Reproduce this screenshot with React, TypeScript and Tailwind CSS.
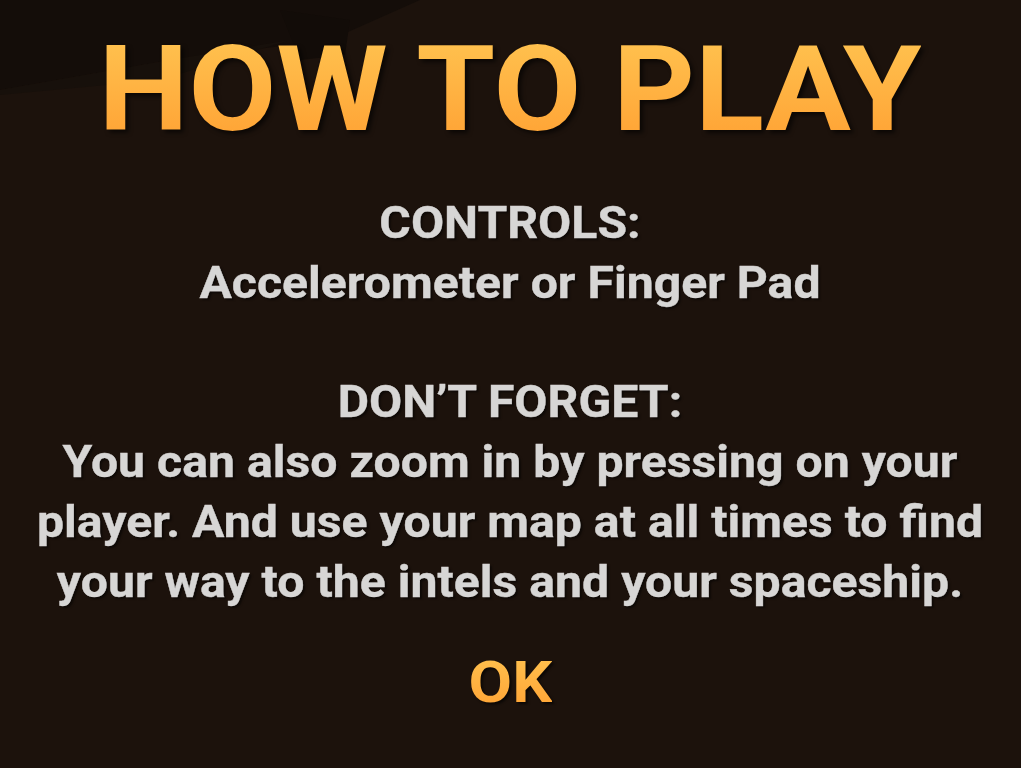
export default function App() {
  return (
    <div
      className="relative h-[768px] w-[1021px] overflow-hidden bg-[#1c120c] text-center"
      style={{ fontFamily: "Roboto, 'Liberation Sans', sans-serif" }}
    >
      <svg className="absolute inset-0" width="1021" height="768" viewBox="0 0 1021 768">
        <polygon points="0,0 420,0 330,40 170,60 0,90" fill="#140d09" />
        <polygon points="0,90 170,60 290,40 160,80 0,95" fill="#17100b" />
        <polygon points="280,10 350,20 345,55 300,60" fill="#120c08" />
      </svg>

      <div className="relative flex flex-col items-center">
        <h1 className="mt-[27px] scale-x-[1.08] bg-gradient-to-b from-[#ffc551] to-[#ff9f31] bg-clip-text text-[118px] font-bold leading-[126px] text-transparent [filter:drop-shadow(3px_3px_2px_rgba(0,0,0,0.6))]">
          HOW TO PLAY
        </h1>

        <div className="mt-[40px] scale-x-[1.095] text-[44px] font-bold leading-[60px] text-[#d7d6d5] [-webkit-text-stroke:0.4px_#d7d6d5] [text-shadow:2px_2px_2px_rgba(0,0,0,0.5)]">
          <p>CONTROLS:</p>
          <p>Accelerometer or Finger Pad</p>
          <p className="mt-[59px]">DON’T FORGET:</p>
          <p>
            You can also zoom in by pressing on your
            <br />
            player. And use your map at all times to find
            <br />
            your way to the intels and your spaceship.
          </p>
        </div>

        <button className="mt-[35px] scale-x-[1.09] bg-gradient-to-b from-[#ffc551] to-[#ff9f31] bg-clip-text text-[58px] font-bold leading-[70px] text-transparent [filter:drop-shadow(2px_2px_1px_rgba(0,0,0,0.6))]">
          OK
        </button>
      </div>
    </div>
  );
}
